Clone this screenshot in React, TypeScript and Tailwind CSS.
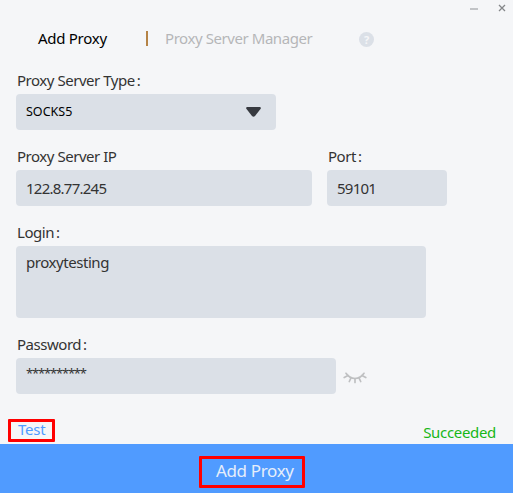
import { useState } from "react";

const label = "h-5 pl-px leading-5 text-[15px] tracking-[-0.47px] whitespace-nowrap";
const field = "rounded-[4px] bg-[#dbe0e7] pl-[10px] whitespace-nowrap";

function TitleBar() {
  return (
    <div className="flex h-4 justify-end pr-[7px]">
      <button className="mt-2 mr-[20px] h-[2px] w-2 bg-[#c2c4c7]" aria-label="Minimize" />
      <button className="mt-[4px] h-2 w-2" aria-label="Close">
        <svg className="block" width="8" height="8" viewBox="0 0 8 8" fill="none" stroke="#85878a" strokeWidth="1.3">
          <path d="M1 1l6 6M7 1L1 7" />
        </svg>
      </button>
    </div>
  );
}

function ClosedEye() {
  return (
    <svg className="mt-1" width="24" height="12" viewBox="0 0 24 12" fill="none" stroke="#bfc0c2" strokeWidth="1.7" strokeLinecap="round">
      <path d="M3 1.300C5.500 5 8.500 6.500 12 6.500S18.500 5 21 1.300" />
      <path d="M5 3.500L1.200 5.500M8 5.800L6.300 9.500M12 6.500V10.500M16 5.800L17.700 9.500M19 3.500L22.800 5.500" />
    </svg>
  );
}

function Label({ text, colon = true }: { text: string; colon?: boolean }) {
  return (
    <div className={label}>
      {text}
      {colon && <span className="ml-[2px]">:</span>}
    </div>
  );
}

export default function App() {
  const [tab, setTab] = useState("add");

  return (
    <div className="flex h-[493px] w-[513px] flex-col overflow-hidden bg-[#f5f6f8] font-['Noto_Sans',sans-serif] text-[#333]">
      <TitleBar />

      {/* Tabs */}
      <div className="mt-3 flex h-5 items-center text-[15px] leading-5 whitespace-nowrap">
        <button onClick={() => setTab("add")} className={`ml-[38px] w-[108px] text-left tracking-[-0.28px] ${tab === "add" ? "text-black" : "text-[#b5b6b8]"}`}>Add Proxy</button>
        <span className="mt-px h-[15px] w-[2px] bg-[#b58346]" />
        <button onClick={() => setTab("manager")} className={`ml-[17px] w-[194px] text-left tracking-[-0.43px] ${tab === "manager" ? "text-black" : "text-[#b5b6b8]"}`}>Proxy Server Manager</button>
        <span className="mt-[2px] flex h-[15px] w-[15px] items-center justify-center rounded-full bg-[#dbe0e7] text-[11px] leading-none font-bold text-[#f5f6f8]">?</span>
      </div>

      <div className="px-4">
        <div className="mt-[22px]">
          <Label text="Proxy Server Type" />
        </div>
        <div className={`mt-1 flex h-9 w-[260px] items-center justify-between pr-[15px] text-black ${field}`}>
          <span className="text-[12.5px]">SOCKS5</span>
          <svg width="15" height="10" viewBox="0 0 15 10" fill="#373a40">
            <path d="M1 0H14Q15.500 0.500 14.500 2L9 9Q7.500 10.500 6 9L0.500 2Q-0.500 0.500 1 0Z" />
          </svg>
        </div>

        <div className="mt-4 flex gap-[15px]">
          <div className="w-[296px]">
            <Label text="Proxy Server IP" colon={false} />
            <div className={`mt-1 h-9 text-[15px] leading-9 tracking-[-0.75px] ${field}`}>122.8.77.245</div>
          </div>
          <div className="w-[120px]">
            <Label text="Port" />
            <div className={`mt-1 h-9 text-[15px] leading-9 tracking-[-0.75px] ${field}`}>59101</div>
          </div>
        </div>

        <div className="mt-4">
          <Label text="Login" />
        </div>
        <div className={`mt-1 h-[72px] w-[410px] pt-[6px] text-[15px] leading-5 tracking-[-0.45px] ${field}`}>proxytesting</div>

        <div className="mt-4">
          <Label text="Password" />
        </div>
        <div className="mt-1 flex items-center gap-[7px]">
          <div className={`h-9 w-[320px] text-[13px] leading-[30px] tracking-[-1.18px] ${field}`}>**********</div>
          <ClosedEye />
        </div>
      </div>

      <div className="mt-[25px] flex h-[25px] items-start justify-between pr-[17px] pl-2 text-[15px] whitespace-nowrap">
        <button className="h-[23px] w-[47px] rounded-[1px] border-[3px] border-[#f00] pb-[2px] pl-[7px] text-left leading-[15px] tracking-[-0.2px] text-[#509bff]">Test</button>
        <span className="mt-[3px] leading-5 tracking-[-0.33px] text-[#17b717]">Succeeded</span>
      </div>

      <div className="flex h-[49px] justify-center bg-[#509bff] pr-[9px]">
        <button className="mt-3 h-8 w-[106px] rounded-[1px] border-[3px] border-[#f00] pb-[3px] pl-[14px] text-left text-[17px] leading-[23px] tracking-[-0.35px] whitespace-nowrap text-[#e6eefa]">Add Proxy</button>
      </div>
    </div>
  );
}
